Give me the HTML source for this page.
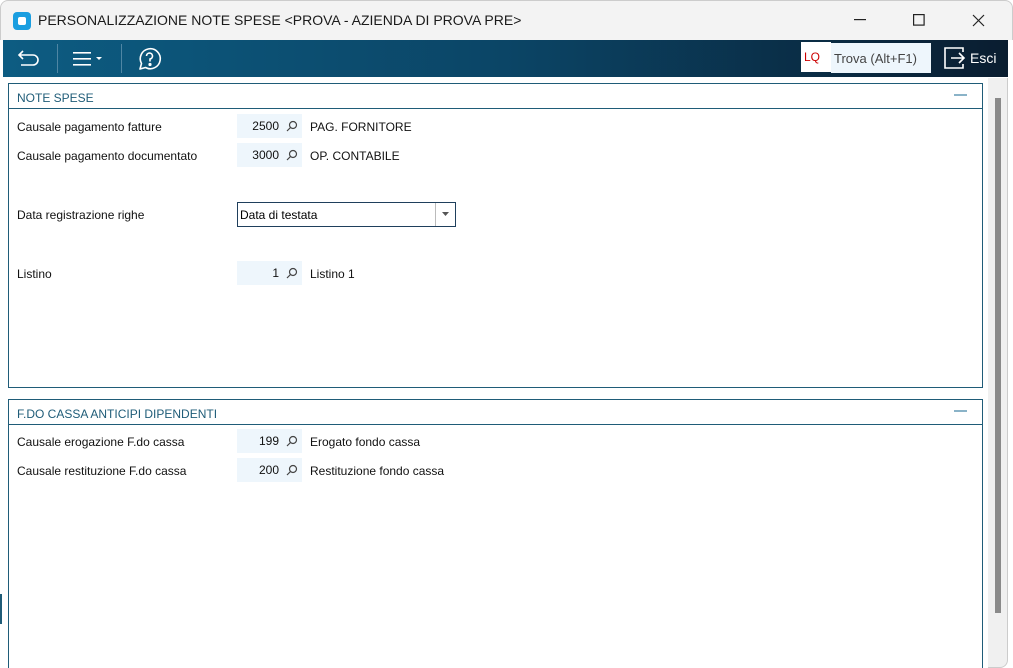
<!DOCTYPE html>
<html style="width:1013px;height:668px;overflow:hidden"><head><meta charset="utf-8"><style>
*{box-sizing:border-box;margin:0;padding:0}
body{width:1013px;height:668px;overflow:hidden;background:#fff;font-family:"Liberation Sans",sans-serif;position:relative}
.title{position:absolute;left:0;top:0;width:1013px;height:40px;background:#f3f3f3;border-radius:8px 8px 0 0;border:1px solid #ccc;border-bottom:none}
.title .t{position:absolute;left:37px;top:11px;font-size:14px;color:#1a1a1a}
.logo{position:absolute;left:12px;top:11px;width:18px;height:18px;border-radius:4px;background:#1a9ee0}
.logo:after{content:"";position:absolute;left:5px;top:5px;width:8px;height:8px;background:#fff;border-radius:2px}
.tb{position:absolute;left:3px;top:40px;width:1005px;height:37px;background:linear-gradient(90deg,#0d5c82 0%,#0b4566 50%,#0a1d30 100%)}
.sep{position:absolute;top:4px;width:1px;height:29px;background:#4f86a4}
.panel{position:absolute;left:8px;width:975px;border:1px solid #1f5c78;background:#fff;overflow:hidden}
.ph{height:25px;border-bottom:1px solid #1f5c78;font-size:12px;color:#1f5c78;padding:7px 0 0 8px}
.ph:after{content:"";position:absolute;right:15px;top:10px;width:13px;height:2px;background:#8ab3c8}
.lbl{position:absolute;left:8px;font-size:12px;color:#111}
.code{position:absolute;left:228px;width:65px;height:24px;background:#eef6fc;font-size:12px;color:#111;text-align:right;padding:5px 23px 0 0}
.code svg{position:absolute;right:4px;top:6px}
.desc{position:absolute;left:301px;font-size:12px;color:#111}
</style></head><body>
<div class="title"><div class="logo"></div><div class="t">PERSONALIZZAZIONE NOTE SPESE &lt;PROVA - AZIENDA DI PROVA PRE&gt;</div>
<svg style="position:absolute;left:853px;top:18px" width="12" height="2"><rect width="12" height="1.2" fill="#222"/></svg>
<svg style="position:absolute;left:912px;top:13px" width="12" height="12"><rect x=".6" y=".6" width="10.5" height="10.5" fill="none" stroke="#222" stroke-width="1.2"/></svg>
<svg style="position:absolute;left:971px;top:13px" width="13" height="13"><path d="M1 1L12 12M12 1L1 12" stroke="#222" stroke-width="1.2"/></svg>
</div>
<div class="tb">
<svg style="position:absolute;left:14px;top:8px" width="24" height="22" fill="none" stroke="#fff" stroke-width="1.6"><path d="M6 3L2 7L6 11M2 7H16A5 5 0 0 1 16 17H4"/></svg>
<div class="sep" style="left:54px"></div>
<svg style="position:absolute;left:70px;top:10px" width="36" height="18" fill="#fff"><rect x="0" y="2" width="18" height="1.6"/><rect x="0" y="8" width="18" height="1.6"/><rect x="0" y="14" width="18" height="1.6"/><path d="M23 7L29 7L26 10Z"/></svg>
<div class="sep" style="left:118px"></div>
<svg style="position:absolute;left:133px;top:6px" width="26" height="26" fill="none" stroke="#fff" stroke-width="1.6"><path d="M4 23L5.5 17.5A10 10 0 1 1 9.5 21.5Z" stroke-linejoin="round"/><path d="M10.5 10A3 3 0 1 1 14 13V15.5"/><circle cx="14" cy="18.5" r=".8" fill="#fff"/></svg>
<div style="position:absolute;left:798px;top:2px;width:30px;height:30px;background:#fff;color:#c00;font-size:12px;padding:8px 0 0 3px">LQ</div>
<div style="position:absolute;left:828px;top:3px;width:100px;height:30px;background:#eef6fc;color:#444;font-size:13px;padding:8px 0 0 3px">Trova (Alt+F1)</div>
<svg style="position:absolute;left:940px;top:7px" width="24" height="22" fill="none" stroke="#fff" stroke-width="1.6"><path d="M8 11H21M16 6L21 11L16 16"/><path d="M20 5V1H2V21H20V17"/></svg>
<div style="position:absolute;left:967px;top:10px;color:#fff;font-size:14px">Esci</div>
</div>
<div class="panel" style="top:83px;height:305px">
<div class="ph">NOTE SPESE</div>
<div class="lbl" style="top:36px">Causale pagamento fatture</div>
<div class="code" style="top:30px">2500<svg width="12" height="12" fill="none" stroke="#444" stroke-width="1.2"><circle cx="7" cy="5" r="3.5"/><path d="M4.5 7.5L1 11"/></svg></div>
<div class="desc" style="top:36px">PAG. FORNITORE</div>
<div class="lbl" style="top:65px">Causale pagamento documentato</div>
<div class="code" style="top:59px">3000<svg width="12" height="12" fill="none" stroke="#444" stroke-width="1.2"><circle cx="7" cy="5" r="3.5"/><path d="M4.5 7.5L1 11"/></svg></div>
<div class="desc" style="top:65px">OP. CONTABILE</div>
<div class="lbl" style="top:124px">Data registrazione righe</div>
<div style="position:absolute;left:228px;top:118px;width:219px;height:25px;border:1px solid #1f3f5c;font-size:12px;padding:5px 0 0 2px">Data di testata
<div style="position:absolute;right:0;top:0;width:20px;height:23px;border-left:1px solid #bbb"><svg style="position:absolute;left:6px;top:9px" width="8" height="5"><path d="M0 0H7L3.5 4Z" fill="#555"/></svg></div></div>
<div class="lbl" style="top:183px">Listino</div>
<div class="code" style="top:177px">1<svg width="12" height="12" fill="none" stroke="#444" stroke-width="1.2"><circle cx="7" cy="5" r="3.5"/><path d="M4.5 7.5L1 11"/></svg></div>
<div class="desc" style="top:183px">Listino 1</div>
</div>
<div class="panel" style="top:399px;height:272px;border-bottom:none">
<div class="ph">F.DO CASSA ANTICIPI DIPENDENTI</div>
<div class="lbl" style="top:35px">Causale erogazione F.do cassa</div>
<div class="code" style="top:29px">199<svg width="12" height="12" fill="none" stroke="#444" stroke-width="1.2"><circle cx="7" cy="5" r="3.5"/><path d="M4.5 7.5L1 11"/></svg></div>
<div class="desc" style="top:35px">Erogato fondo cassa</div>
<div class="lbl" style="top:64px">Causale restituzione F.do cassa</div>
<div class="code" style="top:58px">200<svg width="12" height="12" fill="none" stroke="#444" stroke-width="1.2"><circle cx="7" cy="5" r="3.5"/><path d="M4.5 7.5L1 11"/></svg></div>
<div class="desc" style="top:64px">Restituzione fondo cassa</div>
</div>
<div style="position:absolute;left:988px;top:78px;width:20px;height:590px;background:#f0f0f0;border-radius:0 0 8px 0;border-right:1px solid #ccc;border-bottom:1px solid #ccc"></div>
<div style="position:absolute;left:995px;top:98px;width:6px;height:515px;background:#8a8a8a"></div>
<div style="position:absolute;left:0;top:594px;width:2px;height:30px;background:#1f5c78"></div>
</body></html>
